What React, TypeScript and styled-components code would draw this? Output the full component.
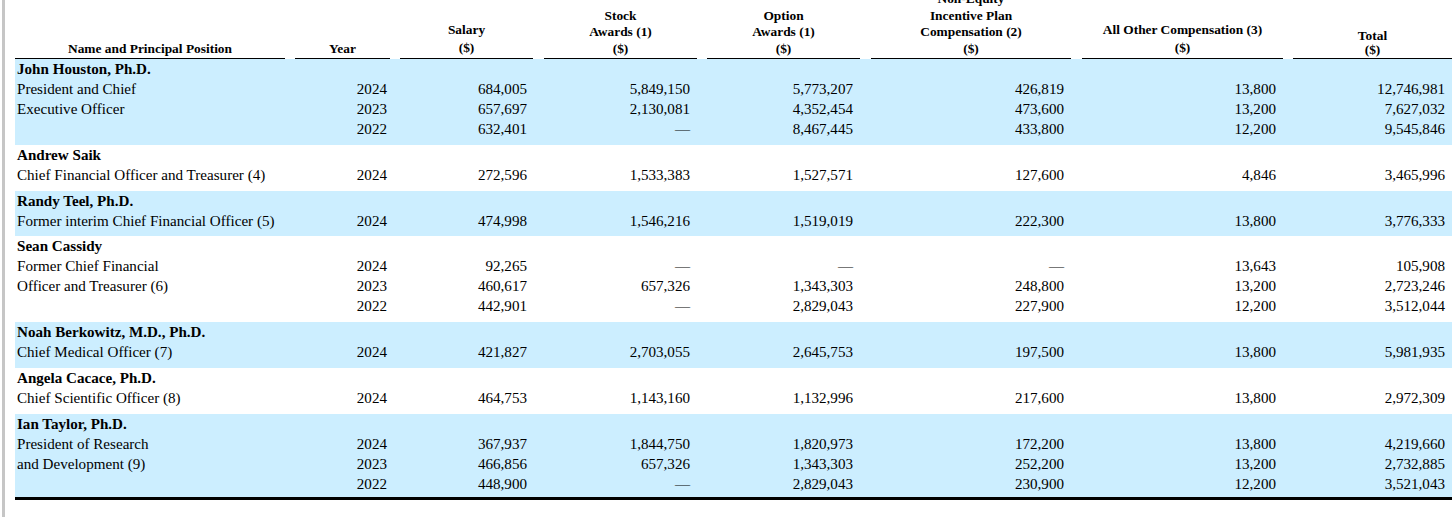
import React from 'react'
import styled, { createGlobalStyle } from 'styled-components'

const GlobalStyle = createGlobalStyle`
  html, body {
    margin: 0;
    padding: 0;
    background: #fff;
  }
  body {
    font-family: "Liberation Serif", "Times New Roman", serif;
    color: #000;
    overflow: hidden;
  }
`

const Page = styled.div`
  margin-left: 2px;
  border-left: 3px solid #c6c6c6;
  padding-left: 10px;
  height: 517px;
  overflow: hidden;
`

const Table = styled.table`
  width: 1437px;
  margin-top: -9px;
  table-layout: fixed;
  border-collapse: collapse;
  border-spacing: 0;
`

const HeadCell = styled.th<{ $lh?: number }>`
  padding: 0 0 1px;
  font-size: 13.4px;
  font-weight: bold;
  line-height: ${(p) => p.$lh ?? 16.5}px;
  text-align: center;
  vertical-align: bottom;
  white-space: nowrap;
  border-bottom: 1.5px solid #000;
`

const HeadGap = styled.th`
  padding: 0;
`

const Row = styled.tr<{ $shade: boolean; $end?: boolean }>`
  background: ${(p) => (p.$shade ? '#cceeff' : '#fff')};
  border-bottom: ${(p) => (p.$end ? '3px solid #000' : 'none')};
`

const Cell = styled.td<{ $bold?: boolean; $num?: boolean; $pr?: number; $tail?: number }>`
  height: 20px;
  padding: 0 ${(p) => (p.$num ? p.$pr ?? 7 : 0)}px ${(p) => p.$tail ?? 0}px
    ${(p) => (p.$num ? 0 : 2)}px;
  font-size: 15.1px;
  font-weight: ${(p) => (p.$bold ? 'bold' : 'normal')};
  line-height: 20px;
  white-space: nowrap;
  text-align: ${(p) => (p.$num ? 'right' : 'left')};
  vertical-align: top;
`

const Gap = styled.td`
  padding: 0;
`

type Line = { title: string; year: string; vals: string[] }
type Person = { name: string; lines: Line[] }

const widths = [270, 10, 95, 10, 133, 11, 153, 10, 153, 11, 200, 11, 201, 10, 159]

const heads: { label: string[]; lh?: number }[] = [
  { label: ['Name and Principal Position'] },
  { label: ['Year'] },
  { label: ['Salary', '($)'], lh: 18 },
  { label: ['Stock', 'Awards (1)', '($)'] },
  { label: ['Option', 'Awards (1)', '($)'] },
  { label: ['Non-Equity', 'Incentive Plan', 'Compensation (2)', '($)'] },
  { label: ['All Other Compensation (3)', '($)'], lh: 18 },
  { label: ['Total', '($)'], lh: 14 },
]

const D = '—'

const people: Person[] = [
  {
    name: 'John Houston, Ph.D.',
    lines: [
      { title: 'President and Chief', year: '2024', vals: ['684,005', '5,849,150', '5,773,207', '426,819', '13,800', '12,746,981'] },
      { title: 'Executive Officer', year: '2023', vals: ['657,697', '2,130,081', '4,352,454', '473,600', '13,200', '7,627,032'] },
      { title: '', year: '2022', vals: ['632,401', D, '8,467,445', '433,800', '12,200', '9,545,846'] },
    ],
  },
  {
    name: 'Andrew Saik',
    lines: [
      { title: 'Chief Financial Officer and Treasurer (4)', year: '2024', vals: ['272,596', '1,533,383', '1,527,571', '127,600', '4,846', '3,465,996'] },
    ],
  },
  {
    name: 'Randy Teel, Ph.D.',
    lines: [
      { title: 'Former interim Chief Financial Officer (5)', year: '2024', vals: ['474,998', '1,546,216', '1,519,019', '222,300', '13,800', '3,776,333'] },
    ],
  },
  {
    name: 'Sean Cassidy',
    lines: [
      { title: 'Former Chief Financial', year: '2024', vals: ['92,265', D, D, D, '13,643', '105,908'] },
      { title: 'Officer and Treasurer (6)', year: '2023', vals: ['460,617', '657,326', '1,343,303', '248,800', '13,200', '2,723,246'] },
      { title: '', year: '2022', vals: ['442,901', D, '2,829,043', '227,900', '12,200', '3,512,044'] },
    ],
  },
  {
    name: 'Noah Berkowitz, M.D., Ph.D.',
    lines: [
      { title: 'Chief Medical Officer (7)', year: '2024', vals: ['421,827', '2,703,055', '2,645,753', '197,500', '13,800', '5,981,935'] },
    ],
  },
  {
    name: 'Angela Cacace, Ph.D.',
    lines: [
      { title: 'Chief Scientific Officer (8)', year: '2024', vals: ['464,753', '1,143,160', '1,132,996', '217,600', '13,800', '2,972,309'] },
    ],
  },
  {
    name: 'Ian Taylor, Ph.D.',
    lines: [
      { title: 'President of Research', year: '2024', vals: ['367,937', '1,844,750', '1,820,973', '172,200', '13,800', '4,219,660'] },
      { title: 'and Development (9)', year: '2023', vals: ['466,856', '657,326', '1,343,303', '252,200', '13,200', '2,732,885'] },
      { title: '', year: '2022', vals: ['448,900', D, '2,829,043', '230,900', '12,200', '3,521,043'] },
    ],
  },
]

const rightPad = [6, 7, 7, 7, 7, 7]

const PersonRows = ({ person, shade, end }: { person: Person; shade: boolean; end: boolean }) => {
  const last = person.lines.length - 1
  return (
    <>
      <Row $shade={shade}>
        <Cell $bold>{person.name}</Cell>
        {Array.from({ length: 14 }).map((_, i) => (i % 2 === 0 ? <Gap key={i} /> : <Cell key={i} />))}
      </Row>
      {person.lines.map((line, i) => {
        const tail = i === last ? (end ? 3 : 5.8) : 0
        return (
          <Row key={i} $shade={shade} $end={end && i === last}>
            <Cell $tail={tail}>{line.title}</Cell>
            <Gap />
            <Cell $num $pr={3} $tail={tail}>
              {line.year}
            </Cell>
            {line.vals.map((v, j) => (
              <React.Fragment key={j}>
                <Gap />
                <Cell $num $pr={rightPad[j]} $tail={tail}>
                  {v}
                </Cell>
              </React.Fragment>
            ))}
          </Row>
        )
      })}
    </>
  )
}

export default function App() {
  return (
    <>
      <GlobalStyle />
      <Page>
        <Table>
          <colgroup>
            {widths.map((w, i) => (
              <col key={i} style={{ width: w }} />
            ))}
          </colgroup>
          <thead>
            <tr>
              {heads.map((h, i) => (
                <React.Fragment key={i}>
                  {i > 0 && <HeadGap />}
                  <HeadCell $lh={h.lh}>
                    {h.label.map((l, k) => (
                      <React.Fragment key={k}>
                        {k > 0 && <br />}
                        {l}
                      </React.Fragment>
                    ))}
                  </HeadCell>
                </React.Fragment>
              ))}
            </tr>
          </thead>
          <tbody>
            {people.map((p, i) => (
              <PersonRows key={i} person={p} shade={i % 2 === 0} end={i === people.length - 1} />
            ))}
          </tbody>
        </Table>
      </Page>
    </>
  )
}
